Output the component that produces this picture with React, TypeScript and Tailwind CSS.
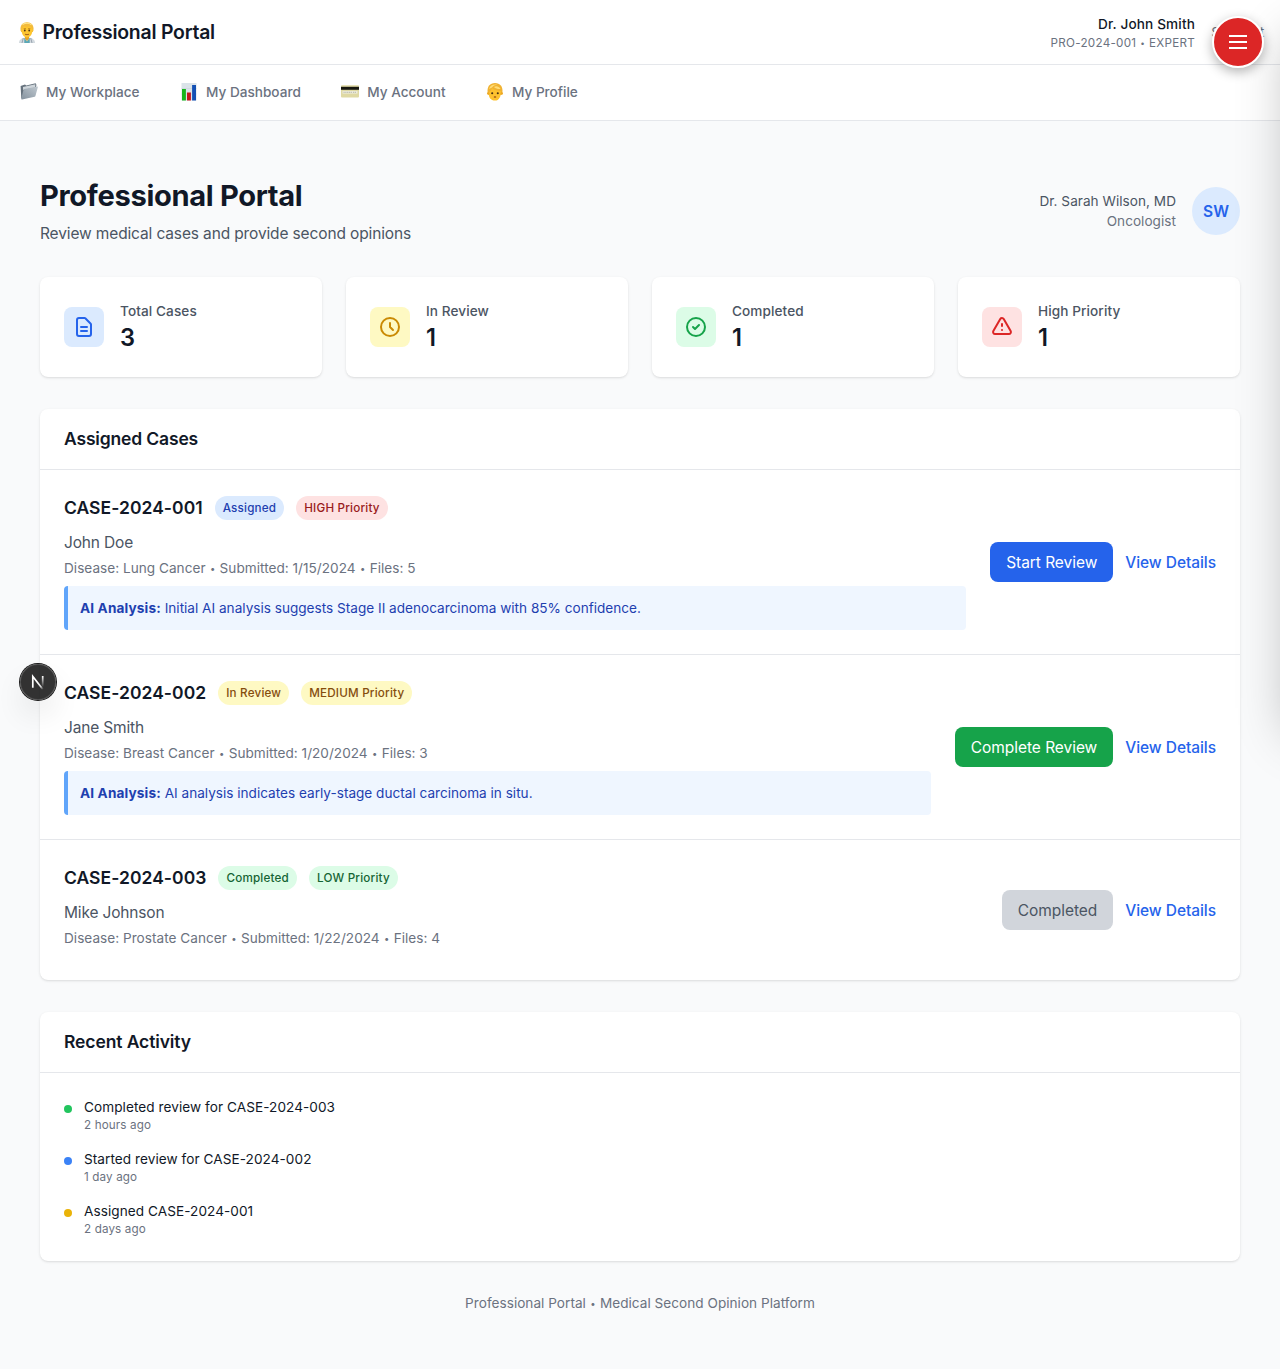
import { Fragment } from "react";

function Doctor() {
  return (
    <svg className="h-[21px] w-[18px]" viewBox="0 0 18 21">
      <path d="M1 21c0-3.200 2.500-4.600 5.200-5.200h5.600c2.700.6 5.200 2 5.200 5.200z" fill="#d3dae0" />
      <path d="M6.300 15.500L9 19.500l2.700-4V21H6.300z" fill="#5ba7b5" />
      <path d="M7 13.500h4v3L9 19l-2-2.500z" fill="#e6a326" />
      <path d="M5.300 16l-1.300 5M12.700 16l1.300 5" stroke="#8996a2" strokeWidth=".8" />
      <path d="M2.600 8.500C1.700 3 5 .2 9 .2s7.300 2.800 6.400 8.300l-.6 1.500H3.200z" fill="#f3bb3c" />
      <path d="M3.600 7c1-.5 1.500-1.500 1.900-2.700 1.600.7 5.200.6 7-.1.500 1.200.9 2.200 1.900 2.800.4 4.800-1.900 8.500-5.400 8.500S3.200 11.800 3.600 7z" fill="#fdc52f" />
      <path d="M4.500 2.600C7 1.200 11 1 13.500 2.700" stroke="#ffe78f" strokeWidth="1.200" fill="none" />
      <path d="M5.700 6.700h2.300M10 6.700h2.300" stroke="#a96f14" strokeWidth=".7" />
      <circle cx="6.800" cy="8.500" r=".9" fill="#4e3514" />
      <circle cx="11.200" cy="8.500" r=".9" fill="#4e3514" />
      <path d="M7 12.200c1.200.6 2.800.6 4 0" stroke="#9c5518" strokeWidth=".9" fill="none" />
    </svg>
  );
}

function Folder() {
  return (
    <svg className="h-[18px] w-[18px]" viewBox="0 0 18 18">
      <defs>
        <linearGradient id="folderFront" x1="0" y1="1" x2="1" y2="0">
          <stop offset="0" stopColor="#84919d" />
          <stop offset="1" stopColor="#c0c9d0" />
        </linearGradient>
      </defs>
      <path d="M.6 3L5 1.600l1.200.8L15.600.2l.8 1.600L15 12.500 1.300 15.500z" fill="#66727d" />
      <path d="M3 4L15.400 1.300l-.3 3.200-12 2.400z" fill="#cfd6db" />
      <path d="M4.200 5.900L17.600 3.400c.3 0 .4.200.3.5l-2.500 9.200c-.1.400-.3.600-.7.7L2 16.500c-.5.1-.8-.2-.7-.7L3.500 6.700c.1-.5.3-.7.700-.8z" fill="url(#folderFront)" />
    </svg>
  );
}

function BarChart() {
  return (
    <svg className="h-[18px] w-[18px]" viewBox="0 0 18 18">
      <path d="M1.500 0h15v17.500h-15z" fill="#dbe3e9" />
      <path d="M1.500 5.500h15M1.500 11h15" stroke="#c3ced7" strokeWidth=".5" />
      <path d="M2 6h3.900v11.500H2z" fill="#17b41c" />
      <path d="M7 9.500h3.900v8H7z" fill="#c5161d" />
      <path d="M12.100 2H16v15.500h-3.900z" fill="#1450b4" />
    </svg>
  );
}

function CreditCard() {
  return (
    <svg className="h-[18px] w-[18px]" viewBox="0 0 18 18">
      <rect x="0" y="2.300" width="18" height="12.200" rx="1" fill="#dfd9a4" />
      <path d="M0 3.800h18v3H0z" fill="#17170f" />
      <path d="M1.500 8h15v2.600h-15z" fill="#ecebdc" />
      <path d="M2.500 9.300h8.500M12 9.300h3.500" stroke="#a9a99c" strokeWidth=".8" strokeDasharray="1.200 .6" />
    </svg>
  );
}

function Person() {
  return (
    <svg className="h-[18px] w-[18px]" viewBox="0 0 18 18">
      <path d="M1.600 9.500C.9 3.400 4 0 9 0s8.100 3.400 7.400 9.500l-.8 2.500H2.400z" fill="#f0b232" />
      <path d="M2.800 9.500C4.500 8.300 5.500 7 6 5.200c2.300 2 5.800 2.500 8.800 2.700.5 5.400-1.700 9.700-5.800 9.700S2.300 14.500 2.800 9.500z" fill="#fdc22f" />
      <path d="M3 6C4 2 8 .8 11.500 1.800 9 2 7 3 6 4.500zM8 4c2-1.500 5-.8 6.500 2C12 6.200 9.500 5.500 8 4z" fill="#ffdc75" />
      <circle cx="2.200" cy="10.400" r="1.200" fill="#eda824" />
      <circle cx="15.800" cy="10.400" r="1.200" fill="#eda824" />
      <circle cx="6.200" cy="10.200" r="1.050" fill="#473011" />
      <circle cx="11.800" cy="10.200" r="1.050" fill="#473011" />
      <ellipse cx="9" cy="14" rx="1.300" ry=".7" fill="#9a4c14" />
    </svg>
  );
}

const nav = [
  { label: "My Workplace", Icon: Folder },
  { label: "My Dashboard", Icon: BarChart },
  { label: "My Account", Icon: CreditCard },
  { label: "My Profile", Icon: Person },
];

const stats = [
  { label: "Total Cases", value: 3, box: "bg-[#dbeafe] text-[#2563eb]", d: "M9 12h6m-6 4h6m2 5H7a2 2 0 01-2-2V5a2 2 0 012-2h5.586a1 1 0 01.707.293l5.414 5.414a1 1 0 01.293.707V19a2 2 0 01-2 2z" },
  { label: "In Review", value: 1, box: "bg-[#fef9c3] text-[#ca8a04]", d: "M12 8v4l3 3m6-3a9 9 0 11-18 0 9 9 0 0118 0z" },
  { label: "Completed", value: 1, box: "bg-[#dcfce7] text-[#16a34a]", d: "M9 12l2 2 4-4m6 2a9 9 0 11-18 0 9 9 0 0118 0z" },
  { label: "High Priority", value: 1, box: "bg-[#fee2e2] text-[#dc2626]", d: "M12 9v2m0 4h.01m-6.938 4h13.856c1.540 0 2.502-1.667 1.732-3L13.732 4c-.77-1.333-2.694-1.333-3.464 0L3.340 16c-.77 1.333.192 3 1.732 3z" },
];

const blue = "bg-[#dbeafe] text-[#1e40af]";
const red = "bg-[#fee2e2] text-[#991b1b]";
const yellow = "bg-[#fef9c3] text-[#854d0e]";
const green = "bg-[#dcfce7] text-[#166534]";

const cases = [
  { id: "CASE-2024-001", status: "Assigned", sc: blue, priority: "HIGH Priority", pc: red, name: "John Doe", meta: ["Disease: Lung Cancer", "Submitted: 1/15/2024", "Files: 5"], ai: "Initial AI analysis suggests Stage II adenocarcinoma with 85% confidence.", action: "Start Review", ac: "bg-[#2563eb] text-white" },
  { id: "CASE-2024-002", status: "In Review", sc: yellow, priority: "MEDIUM Priority", pc: yellow, name: "Jane Smith", meta: ["Disease: Breast Cancer", "Submitted: 1/20/2024", "Files: 3"], ai: "AI analysis indicates early-stage ductal carcinoma in situ.", action: "Complete Review", ac: "bg-[#16a34a] text-white" },
  { id: "CASE-2024-003", status: "Completed", sc: green, priority: "LOW Priority", pc: green, name: "Mike Johnson", meta: ["Disease: Prostate Cancer", "Submitted: 1/22/2024", "Files: 4"], ai: "", action: "Completed", ac: "bg-[#d1d5db] text-[#4b5563]" },
];

const activity = [
  { text: "Completed review for CASE-2024-003", time: "2 hours ago", dot: "bg-[#22c55e]" },
  { text: "Started review for CASE-2024-002", time: "1 day ago", dot: "bg-[#3b82f6]" },
  { text: "Assigned CASE-2024-001", time: "2 days ago", dot: "bg-[#eab308]" },
];

const card = "rounded-lg bg-white shadow-[0_1px_3px_rgba(0,0,0,0.1),0_1px_2px_-1px_rgba(0,0,0,0.1)]";
const xs = "text-[11.65px] leading-4";
const sm = "text-[13.6px] leading-5";
const base = "text-[15.5px] leading-[23px]";
const lg = "text-[17.5px] leading-7 font-semibold";
const badge = `rounded-full px-2 py-1 font-medium tracking-[0.2px] whitespace-nowrap ${xs}`;

/* Joins the parts with a small bullet. */
function Dotted({ parts }: { parts: string[] }) {
  return (
    <>
      {parts.map((p, i) => (
        <Fragment key={p}>
          {i > 0 && <>{" "}<span className="inline-block w-[0.47em] text-center align-[0.08em] leading-none"><span className="-mx-1 text-[0.7em]">•</span></span>{" "}</>}
          {p}
        </Fragment>
      ))}
    </>
  );
}

export default function App() {
  return (
    <div className="relative min-h-[1369px] overflow-hidden bg-[#f9fafb] font-['Inter',sans-serif] text-[#111827]">
      <header className="flex h-[65px] items-center justify-between border-b border-[#e5e7eb] bg-white px-4">
        <div className="flex items-center gap-[7px] pl-[1.5px]">
          <Doctor />
          <span className="text-[19.4px] leading-7 font-semibold tracking-[-0.22px]">Professional Portal</span>
        </div>
        <div className="flex items-center gap-4">
          <div className="text-right">
            <div className={`font-medium tracking-[0.14px] ${sm}`}>Dr. John Smith</div>
            <div className={`pt-px tracking-[0.28px] text-[#6b7280] ${xs}`}><Dotted parts={["PRO-2024-001", "EXPERT"]} /></div>
          </div>
          <button className="w-[53px] text-[13.6px] leading-5 tracking-[-0.3px] whitespace-nowrap text-[#6b7280]">Sign Out</button>
        </div>
      </header>
      <nav className={`flex h-14 items-center gap-[40.4px] border-b border-[#e5e7eb] bg-white px-5 pb-0.5 font-medium text-[#6b7280] ${sm}`}>
        {nav.map(({ label, Icon }) => (
          <a key={label} className="flex items-center gap-2"><Icon />{label}</a>
        ))}
      </nav>
      <main className="px-10 py-14">
        <div className="mb-8 flex items-center justify-between">
          <div>
            <h1 className="pt-px text-[29.1px] leading-[35px] font-bold tracking-[-0.33px]">Professional Portal</h1>
            <p className={`mt-2 pt-px tracking-[-0.135px] text-[#4b5563] ${base}`}>Review medical cases and provide second opinions</p>
          </div>
          <div className="flex items-center gap-4">
            <div className={`text-right tracking-[0.03px] ${sm}`}>
              <p className="text-[#4b5563]">Dr. Sarah Wilson, MD</p>
              <p className="text-[#6b7280]">Oncologist</p>
            </div>
            <div className={`flex size-12 items-center justify-center rounded-full bg-[#dbeafe] pt-px font-semibold text-[#2563eb] ${base}`}>SW</div>
          </div>
        </div>
        <div className="mb-8 grid grid-cols-4 gap-6">
          {stats.map((s) => (
            <div key={s.label} className={`flex items-center gap-4 p-6 ${card}`}>
              <div className={`rounded-lg p-2 ${s.box}`}>
                <svg className="size-6" fill="none" stroke="currentColor" strokeWidth={2} strokeLinecap="round" strokeLinejoin="round" viewBox="0 0 24 24"><path d={s.d} /></svg>
              </div>
              <div>
                <p className={`font-medium tracking-[0.09px] text-[#4b5563] ${sm}`}>{s.label}</p>
                <p className="pt-px text-[23.6px] leading-[31px] font-semibold">{s.value}</p>
              </div>
            </div>
          ))}
        </div>
        <section className={`mb-8 ${card}`}>
          <h2 className={`border-b border-[#e5e7eb] px-6 py-4 tracking-[-0.16px] ${lg}`}>Assigned Cases</h2>
          <div className="divide-y divide-[#e5e7eb]">
            {cases.map((c) => (
              <div key={c.id} className="flex items-center justify-between p-6">
                <div className="flex-1">
                  <div className="mb-2 flex items-center gap-3">
                    <h3 className={`tracking-[0.05px] ${lg}`}>{c.id}</h3>
                    <span className={`${badge} ${c.sc}`}>{c.status}</span>
                    <span className={`${badge} ${c.pc}`}>{c.priority}</span>
                  </div>
                  <p className={`mb-1 pt-px tracking-[-0.16px] text-[#4b5563] ${base}`}>{c.name}</p>
                  <p className={`mb-2 tracking-[0.02px] text-[#6b7280] ${sm}`}><Dotted parts={c.meta} /></p>
                  {c.ai && (
                    <div className={`rounded border-l-4 border-[#60a5fa] bg-[#eff6ff] p-3 text-[#1e40af] ${sm}`}>
                      <strong className="font-bold tracking-[0.14px]">AI Analysis:</strong> {c.ai}
                    </div>
                  )}
                </div>
                <div className={`ml-6 flex items-center gap-3 tracking-[-0.05px] ${base}`}>
                  <button className={`rounded-lg px-4 pt-[9px] pb-2 ${c.ac}`}>{c.action}</button>
                  <button className="pt-px font-medium text-[#2563eb]">View Details</button>
                </div>
              </div>
            ))}
          </div>
        </section>
        <section className={card}>
          <h2 className={`border-b border-[#e5e7eb] px-6 py-4 tracking-[-0.1px] ${lg}`}>Recent Activity</h2>
          <div className="space-y-4 p-6">
            {activity.map((a) => (
              <div key={a.text} className="flex items-start gap-3">
                <div className={`mt-2 size-2 rounded-full ${a.dot}`} />
                <div>
                  <p className={`tracking-[0.06px] ${sm}`}>{a.text}</p>
                  <p className={`tracking-[0.14px] text-[#6b7280] ${xs}`}>{a.time}</p>
                </div>
              </div>
            ))}
          </div>
        </section>
        <footer className={`mt-8 text-center tracking-[0.02px] text-[#6b7280] ${sm}`}><Dotted parts={["Professional Portal", "Medical Second Opinion Platform"]} /></footer>
      </main>

      {/* Off-canvas drawer; only its shadow reaches the page. */}
      <div className="absolute top-0 left-full h-[720px] w-80 bg-white shadow-[0_25px_50px_-12px_rgba(0,0,0,0.3)]" />

      <button aria-label="Menu" className="absolute top-4 right-4 flex size-[52px] flex-col items-center justify-center gap-1 rounded-full border-2 border-white bg-[#dc2626] shadow-[0_4px_12px_rgba(0,0,0,0.3)]">
        <span className="h-0.5 w-[18px] bg-white" />
        <span className="h-0.5 w-[18px] bg-white" />
        <span className="h-0.5 w-[18px] bg-white" />
      </button>

      <div className="absolute top-[664px] left-5 size-9 rounded-full bg-black/80 shadow-[0_0_0_1px_#171717,inset_0_0_0_1px_rgba(255,255,255,0.14),0_16px_32px_-8px_rgba(0,0,0,0.24)]">
        <svg className="size-9" viewBox="0 0 36 36" fill="none" strokeWidth="1.700">
          <defs>
            <linearGradient id="nDiagonal" x1="18" y1="18" x2="23.500" y2="25" gradientUnits="userSpaceOnUse">
              <stop stopColor="#fff" />
              <stop offset=".6" stopColor="#fff" stopOpacity=".8" />
              <stop offset="1" stopColor="#fff" stopOpacity="0" />
            </linearGradient>
            <linearGradient id="nStem" x1="22" y1="12" x2="22" y2="23" gradientUnits="userSpaceOnUse">
              <stop stopColor="#fff" />
              <stop offset="1" stopColor="#fff" stopOpacity="0" />
            </linearGradient>
          </defs>
          <path d="M12.800 23.800V12.500L23 25.500" stroke="url(#nDiagonal)" />
          <path d="M22.700 12v11" stroke="url(#nStem)" />
        </svg>
      </div>
    </div>
  );
}
